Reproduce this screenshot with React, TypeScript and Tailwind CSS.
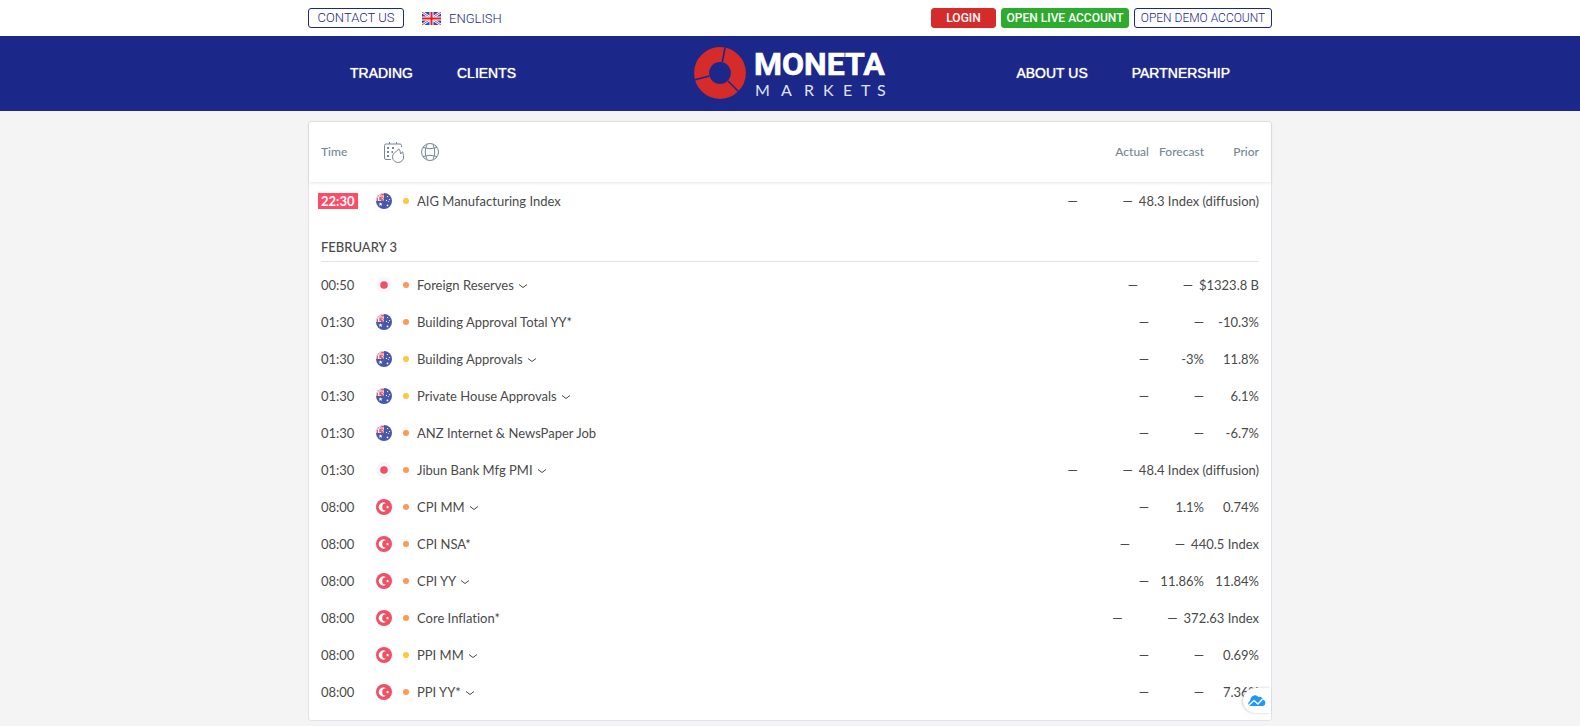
import React from "react";

type Country = "au" | "jp" | "tr";

interface Event {
  time: string;
  country: Country;
  level: "low" | "medium";
  name: string;
  expandable?: boolean;
  forecast?: string;
  prior: string;
  live?: boolean;
}

const yesterday: Event[] = [
  { time: "22:30", country: "au", level: "low", name: "AIG Manufacturing Index", prior: "48.3 Index (diffusion)", live: true },
];

const february3: Event[] = [
  { time: "00:50", country: "jp", level: "medium", name: "Foreign Reserves", expandable: true, prior: "$1323.8 B" },
  { time: "01:30", country: "au", level: "medium", name: "Building Approval Total YY*", prior: "-10.3%" },
  { time: "01:30", country: "au", level: "low", name: "Building Approvals", expandable: true, forecast: "-3%", prior: "11.8%" },
  { time: "01:30", country: "au", level: "low", name: "Private House Approvals", expandable: true, prior: "6.1%" },
  { time: "01:30", country: "au", level: "medium", name: "ANZ Internet & NewsPaper Job", prior: "-6.7%" },
  { time: "01:30", country: "jp", level: "medium", name: "Jibun Bank Mfg PMI", expandable: true, prior: "48.4 Index (diffusion)" },
  { time: "08:00", country: "tr", level: "medium", name: "CPI MM", expandable: true, forecast: "1.1%", prior: "0.74%" },
  { time: "08:00", country: "tr", level: "medium", name: "CPI NSA*", prior: "440.5 Index" },
  { time: "08:00", country: "tr", level: "medium", name: "CPI YY", expandable: true, forecast: "11.86%", prior: "11.84%" },
  { time: "08:00", country: "tr", level: "medium", name: "Core Inflation*", prior: "372.63 Index" },
  { time: "08:00", country: "tr", level: "low", name: "PPI MM", expandable: true, prior: "0.69%" },
  { time: "08:00", country: "tr", level: "medium", name: "PPI YY*", expandable: true, prior: "7.36%" },
];

function Flag({ country }: { country: Country }) {
  if (country === "jp") {
    return (
      <svg viewBox="0 0 16 16" className="size-4 shrink-0" aria-hidden="true">
        <circle cx="8" cy="8" r="8" fill="#f5f7fa" />
        <circle cx="8" cy="8" r="3.8" fill="#ef5064" />
      </svg>
    );
  }
  if (country === "tr") {
    return (
      <svg viewBox="0 0 16 16" className="size-4 shrink-0" aria-hidden="true">
        <circle cx="8" cy="8" r="8" fill="#ef5064" />
        <path d="M10 4.200a4.600 4.600 0 1 0 0 7.600 3.800 3.800 0 1 1 0-7.600z" fill="#fff" />
        <path d="M11.6 6.400l.5 1.100 1.200.1-.9.8.2 1.200-1-.6-1 .6.2-1.200-.9-.8 1.200-.1z" fill="#fff" />
      </svg>
    );
  }
  return (
    <svg viewBox="0 0 16 16" className="size-4 shrink-0" aria-hidden="true">
      <circle cx="8" cy="8" r="8" fill="#4757a9" />
      <path d="M8 0A8 8 0 0 0 0 8h8z" fill="#f5f7fa" />
      <path d="M8 .5A8 8 0 0 0 .5 8H2V2.500h6z" fill="#ef5064" />
      <path d="M3.600 4.400L7.600 8M4 7.500V4.200h3.500" stroke="#ef5064" strokeWidth="1.300" fill="none" />
      <path d="M8 5.300v1.500L6.600 5.300zM5.300 8H7L5.300 6.500z" fill="#4757a9" />
      <path d="M4.500 9.200l.6 1.300 1.400.1-1 .9.300 1.400-1.300-.8-1.200.8.3-1.400-1.100-.9 1.400-.1z" fill="#fff" />
      <g fill="#fff">
        <circle cx="11.500" cy="3.600" r=".7" />
        <circle cx="13.500" cy="6.600" r=".7" />
        <circle cx="10.500" cy="7.400" r=".6" />
        <circle cx="12.300" cy="8.600" r=".5" />
        <circle cx="11.500" cy="12.400" r=".9" />
      </g>
    </svg>
  );
}

function BritishFlag() {
  return (
    <svg viewBox="0 0 19 13" className="h-[13px] w-[19px]" aria-hidden="true">
      <rect width="19" height="13" fill="#1450c8" />
      <path d="M0 0l19 13M19 0L0 13" stroke="#fff" strokeWidth="2.600" />
      <path d="M0 0l19 13M19 0L0 13" stroke="#f33" strokeWidth="1" />
      <path d="M9.500 0v13M0 6.500h19" stroke="#fff" strokeWidth="4" />
      <path d="M9.500 0v13M0 6.500h19" stroke="#ed1c24" strokeWidth="2" />
    </svg>
  );
}

function Logo() {
  return (
    <svg viewBox="0 0 192 52" className="h-[52px] w-[192px] overflow-visible" role="img" aria-label="Moneta Markets">
      <circle cx="26" cy="26" r="18.400" fill="none" stroke="#d52b2b" strokeWidth="15" />
      <path d="M28.200 15.500L31.200 0M15.500 29L0 33M34 34L44.500 44.500" stroke="#1b2889" strokeWidth="1.600" />
      <text x="60" y="28" fontSize="32" fontWeight="700" fill="#fff" stroke="#fff" strokeWidth=".6" className="font-[Roboto,sans-serif]">MONETA</text>
      <text x="61 87 110 129 149 167 183" y="49" fontSize="16" fontWeight="400" fill="#dfe2f2" className="font-[Lato,sans-serif]">MARKETS</text>
    </svg>
  );
}

function Row({ event }: { event: Event }) {
  const value = "min-w-[49px] text-right whitespace-nowrap";
  return (
    <tr className="flex h-[37px] items-center px-3">
      <td className="w-[55px] pt-px">
        <span className={event.live ? "-ml-[3px] bg-[#ff4a68] px-[3px] font-bold text-white" : ""}>{event.time}</span>
      </td>
      <td className="flex w-[41px] items-center gap-[11px]">
        <Flag country={event.country} />
        <span className={`size-1.5 rounded-full ${event.level === "low" ? "bg-[#fdc93a]" : "bg-[#ff9850]"}`} />
      </td>
      <td className="flex-1 pt-0.5 whitespace-nowrap">
        {event.expandable ? (
          <button type="button" className="flex items-center gap-1">
            {event.name}
            <svg viewBox="0 0 10 6" className="h-1.5 w-2.5" fill="none" stroke="#4a4a4a" aria-hidden="true">
              <path d="M1 1.500l4 3 4-3" />
            </svg>
          </button>
        ) : (
          event.name
        )}
      </td>
      <td className="flex gap-1.5 pt-px">
        <span className={value}>—</span>
        <span className={value}>{event.forecast ?? "—"}</span>
        <span className={value}>{event.prior}</span>
      </td>
    </tr>
  );
}

export default function App() {
  const navLink = "[text-shadow:0_0_1px_#fff]";
  const pill = "flex h-5 items-center justify-center rounded-[3px] border";
  return (
    <div className="min-h-screen bg-[#f4f4f4]">
      <div className="bg-white font-[Roboto,sans-serif] text-xs text-[#1b2889]">
        <div className="mx-auto flex h-9 max-w-[964px] items-center">
          <a href="#contact" className={`${pill} w-24 border-[#1b2889] text-[13px] font-light`}>CONTACT US</a>
          <a href="#language" className="ml-[18px] flex items-center gap-2 pt-px text-[13px] font-light">
            <BritishFlag />
            ENGLISH
          </a>
          <div className="ml-auto flex gap-[5px]">
            <a href="#login" className={`${pill} w-[65px] border-[#d52b2b] bg-[#d52b2b] font-medium text-white`}>LOGIN</a>
            <a href="#live" className={`${pill} w-32 border-[#2dab2d] bg-[#2dab2d] font-medium text-white`}>OPEN LIVE ACCOUNT</a>
            <a href="#demo" className={`${pill} w-[138px] border-[#1b2889] font-light`}>OPEN DEMO ACCOUNT</a>
          </div>
        </div>
      </div>

      <header className="bg-[#1b2889] font-['Liberation_Sans',sans-serif] text-sm text-white">
        <nav className="mx-auto flex h-[75px] max-w-[964px] items-center px-[42px] pb-0.5">
          <div className="flex flex-1 gap-11">
            <a href="#trading" className={navLink}>TRADING</a>
            <a href="#clients" className={navLink}>CLIENTS</a>
          </div>
          <a href="#home"><Logo /></a>
          <div className="flex flex-1 justify-end gap-11">
            <a href="#about" className={navLink}>ABOUT US</a>
            <a href="#partnership" className={navLink}>PARTNERSHIP</a>
          </div>
        </nav>
      </header>

      <main className="pt-[10px] pb-1.5">
        <div className="relative mx-auto max-w-[964px] rounded-[3px] border border-[#e0e3eb] bg-white pb-2.5 font-[Lato,sans-serif] text-[13px] leading-[17px] text-[#4a4a4a] [font-variant-ligatures:none]">
          <table className="block w-full">
            <thead className="block">
              <tr className="flex h-[60px] items-center px-3 text-xs text-[#758696] shadow-[0_1px_3px_rgba(0,0,0,0.1)]">
                <th className="w-[62px] text-left font-medium">Time</th>
                <th className="flex flex-1 items-center gap-4">
                  <button type="button" aria-label="Importance">
                    <svg viewBox="0 0 22 22" className="size-[22px]" fill="none" stroke="#758696" aria-hidden="true">
                      <path d="M8 18.500H3A1.500 1.500 0 0 1 1.500 17V4.500A1.500 1.500 0 0 1 3 3h14a1.500 1.500 0 0 1 1.500 1.500V6M6.500 1v2M13.500 1v2" />
                      <path d="M4 7h2M9 7h2M4 11h2M4 15h2" strokeWidth="2" />
                      <path d="M8.500 11h1.500" strokeWidth="2" />
                      <path d="M15.700 7.800C15 10 11.500 11 10.200 13.200a5.600 5.600 0 1 0 10.300 1.300c-.1-1.300-.9-2-.7-3.600-1.200.3-1.800 1-2.200 2.100-.4-1.600-.2-3.800-1.900-5.200z" />
                    </svg>
                  </button>
                  <button type="button" aria-label="Countries">
                    <svg viewBox="0 0 18 18" className="size-[18px]" fill="none" stroke="#758696" aria-hidden="true">
                      <circle cx="9" cy="9" r="8.500" />
                      <path d="M6 1.500q-3.500 7.500 0 15M12 1.500q3.500 7.500 0 15M2 4.500q7 2.500 14 0M2 13.500q7-2.500 14 0" />
                    </svg>
                  </button>
                </th>
                <th className="flex gap-1.5 font-medium">
                  <span className="min-w-[49px] text-right">Actual</span>
                  <span className="min-w-[49px] text-right">Forecast</span>
                  <span className="min-w-[49px] text-right">Prior</span>
                </th>
              </tr>
            </thead>
            <tbody className="block">
              {yesterday.map((event) => <Row key={event.name} event={event} />)}
            </tbody>
            <tbody className="block">
              <tr className="mx-3 mt-4 mb-1 flex h-[27px] items-center border-b border-[#e0e3eb] pb-0.5">
                <th className="font-medium">FEBRUARY 3</th>
              </tr>
              {february3.map((event) => <Row key={event.name} event={event} />)}
            </tbody>
          </table>
          <a href="#charts" aria-label="Charts" className="absolute right-0 bottom-[7px] flex h-[25px] w-7 items-center rounded-l-full bg-white pl-[5px] shadow-[-1px_0_3px_rgba(0,0,0,0.2)]">
            <svg viewBox="0 0 18 11" className="h-[11px] w-[18px]" aria-hidden="true">
              <path d="M2.500 11A2.500 2.500 0 0 1 .5 7.500 C1.500 6 2 6.500 2.500 4 A4.500 4.500 0 0 1 10.500 2 A3.500 3.500 0 0 1 15 4.500 A3.400 3.400 0 0 1 15 11z" fill="#2196f3" />
              <path d="M1 10l5-4.500 4 3.500 4.500-5" fill="none" stroke="#fff" strokeWidth="1.300" />
            </svg>
          </a>
        </div>
      </main>
    </div>
  );
}
